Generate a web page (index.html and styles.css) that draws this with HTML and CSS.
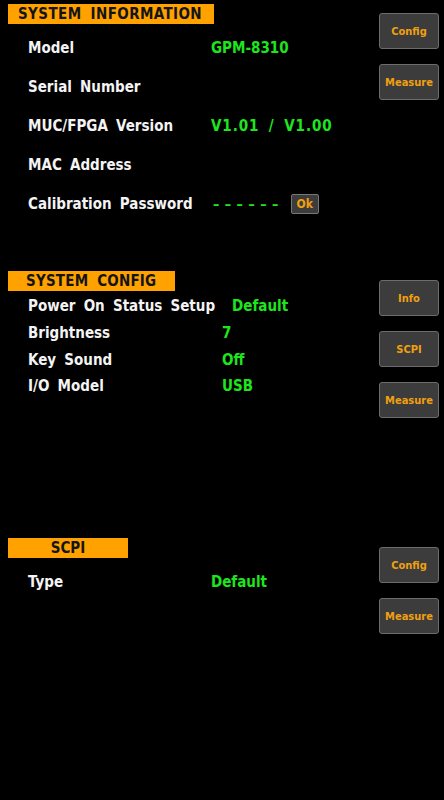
FILE: index.html
```html
<!DOCTYPE html>
<html>
<head>
<meta charset="utf-8">
<link rel="stylesheet" href="styles.css">
</head>
<body>
<div class="screen">
  <section class="panel">
    <div class="main">
      <div class="title title-info">SYSTEM INFORMATION</div>
      <div class="rows rows-info">
        <div class="row"><span class="label">Model</span><span class="value">GPM-8310</span></div>
        <div class="row"><span class="label">Serial Number</span><span class="value"></span></div>
        <div class="row"><span class="label">MUC/FPGA Version</span><span class="value ver">V1.01 / V1.00</span></div>
        <div class="row"><span class="label">MAC Address</span><span class="value"></span></div>
        <div class="row"><span class="label">Calibration Password</span><span class="value dashes">––––––</span><span class="ok">Ok</span></div>
      </div>
    </div>
    <div class="side">
      <div class="btn">Config</div>
      <div class="btn">Measure</div>
    </div>
  </section>

  <section class="panel">
    <div class="main">
      <div class="title title-config">SYSTEM CONFIG</div>
      <div class="rows rows-config">
        <div class="row"><span class="label">Power On Status Setup</span><span class="value">Default</span></div>
        <div class="row"><span class="label">Brightness</span><span class="value">7</span></div>
        <div class="row"><span class="label">Key Sound</span><span class="value">Off</span></div>
        <div class="row"><span class="label">I/O Model</span><span class="value">USB</span></div>
      </div>
    </div>
    <div class="side">
      <div class="btn">Info</div>
      <div class="btn">SCPI</div>
      <div class="btn">Measure</div>
    </div>
  </section>

  <section class="panel">
    <div class="main">
      <div class="title title-scpi">SCPI</div>
      <div class="rows rows-info">
        <div class="row"><span class="label">Type</span><span class="value">Default</span></div>
      </div>
    </div>
    <div class="side">
      <div class="btn">Config</div>
      <div class="btn">Measure</div>
    </div>
  </section>
</div>
</body>
</html>
```
FILE: styles.css
```css
html, body {
  margin: 0;
  padding: 0;
  background: #000;
}
body {
  font-family: "DejaVu Sans Condensed", "DejaVu Sans", sans-serif;
  font-stretch: condensed;
  font-weight: bold;
  color: #f4f4f4;
}
.screen {
  width: 444px;
  height: 800px;
  overflow: hidden;
}
.panel {
  display: flex;
  height: 267px;
  padding-top: 4px;
  box-sizing: border-box;
}
.main {
  flex: 1;
}
.side {
  width: 60px;
  margin-right: 5px;
  padding-top: 9px;
  display: flex;
  flex-direction: column;
  gap: 15px;
}
.btn {
  height: 36px;
  box-sizing: border-box;
  background: #3c3c3c;
  border: 1px solid #6c6c6c;
  border-radius: 3px;
  color: #f0a010;
  font-size: 11px;
  display: flex;
  align-items: center;
  justify-content: center;
}
.title {
  margin-left: 8px;
  height: 20px;
  box-sizing: border-box;
  background: #ffa200;
  color: #141414;
  font-size: 15px;
  line-height: 20px;
  word-spacing: 4px;
}
.title-info { width: 206px; padding-left: 10px; letter-spacing: 0.4px; }
.title-config { width: 167px; padding-left: 18px; letter-spacing: 0.2px; }
.title-scpi { width: 120px; text-align: center; }

.rows { padding-left: 28px; }
.rows-info { margin-top: 4px; }
.rows-config { margin-top: 2px; }
.row {
  display: flex;
  align-items: center;
  font-size: 15px;
  word-spacing: 3.5px;
  white-space: nowrap;
}
.rows-info .row { height: 39px; }
.rows-config .row { height: 26.7px; }
.label {
  flex-shrink: 0;
  margin-right: 17px;
}
.rows-info .label { min-width: 166px; }
.rows-config .label { min-width: 177px; }
.value {
  color: #1ee61e;
}
.ver { letter-spacing: 0.9px; word-spacing: 4px; }
.dashes {
  font-size: 14px;
  letter-spacing: 5.5px;
  margin-left: 2px;
}
.ok {
  margin-left: 7px;
  width: 28px;
  height: 20px;
  box-sizing: border-box;
  background: #3c3c3c;
  border: 1px solid #777;
  border-radius: 2px;
  color: #f0a010;
  font-size: 12px;
  display: flex;
  align-items: center;
  justify-content: center;
}
```
